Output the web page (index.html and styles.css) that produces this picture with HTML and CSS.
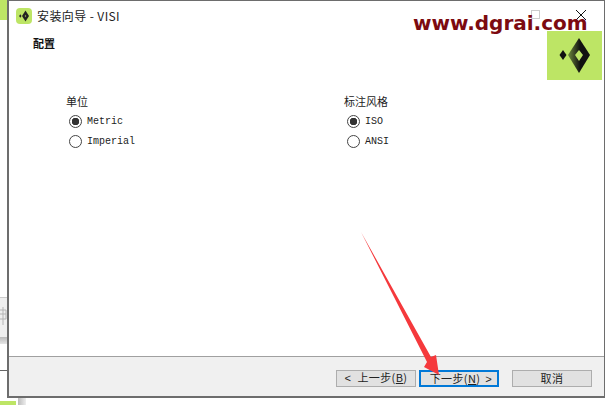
FILE: index.html
```html
<!DOCTYPE html>
<html lang="en">
<head>
	<meta charset="UTF-8">
	<title>安装向导 - VISI</title>
	<link rel="stylesheet" href="styles.css">
</head>
<body>
	<div class="desk-green-top"></div>
	<div class="desk-panel">
		<svg class="desk-glyph" viewBox="0 0 8 26"><path d="M0 5H6V14H0M0 9H6M3 2V20M7.500 0V25" stroke="#b5b5b5" fill="none"/></svg>
	</div>
	<div class="desk-shade"></div>
	<div class="desk-line"></div>
	<div class="desk-green-bottom"></div>
	<div class="desk-tab"></div>

	<div class="window">
		<div class="titlebar">
			<svg class="app-icon" viewBox="0 0 16 16">
				<rect width="16" height="16" rx="4" fill="#bde565"/>
				<path d="M9.500 2.500 13 8l-3.500 5.500L6 8z" fill="#222"/>
				<path d="M9.500 6.800 10.300 8l-.8 1.200L8.700 8z" fill="#8aa84d"/>
				<path d="M4.300 6.200 5.500 8 4.300 9.800 3.100 8z" fill="#222"/>
			</svg>
			<span class="title">安装向导 - VISI</span>
		</div>
		<div class="content">
			<div class="page-head">
				<span class="page-title">配置</span>
				<svg class="logo" viewBox="0 0 55 49">
					<rect width="55" height="49" fill="#bde565"/>
					<defs>
						<linearGradient id="fade" x1="0" y1="0" x2="1" y2="0">
							<stop offset="0" stop-color="#6f8a3c"/>
							<stop offset="0.55" stop-color="#111"/>
						</linearGradient>
					</defs>
					<path d="M32 7 43 24 32 42 21 24z" fill="url(#fade)"/>
					<path d="M32 19 36 24 32 30 28 24z" fill="#bde565"/>
					<path d="M16 19 19.500 24 16 29 12.500 24z" fill="#111"/>
				</svg>
			</div>
			<div class="groups">
				<div class="group">
					<div class="group-label">单位</div>
					<div class="radio on"><i></i><span>Metric</span></div>
					<div class="radio"><i></i><span>Imperial</span></div>
				</div>
				<div class="group">
					<div class="group-label">标注风格</div>
					<div class="radio on"><i></i><span>ISO</span></div>
					<div class="radio"><i></i><span>ANSI</span></div>
				</div>
			</div>
		</div>
		<div class="footer">
			<button class="btn"><span class="chev-back">&lt;</span> 上一步(<u>B</u>)</button>
			<button class="btn primary">下一步(<u>N</u>) <span class="chev-next">&gt;</span></button>
			<button class="btn cancel">取消</button>
		</div>
	</div>

	<svg class="close-x" viewBox="0 0 10 10"><path d="M0 0 10 10M10 0 0 10" stroke="#111" stroke-width="1" fill="none"/></svg>
	<div class="max-box"></div>
	<div class="watermark">www.dgrai.com</div>
	<svg class="arrow" viewBox="0 0 612 405">
		<path d="M361 232 431 357 436 355 439 375 424 367 427 362z" fill="#f5393c"/>
	</svg>
</body>
</html>
```

FILE: styles.css
```css
*{
	margin: 0;
	padding: 0;
	box-sizing: border-box;
}
body{
	position: relative;
	width: 612px;
	height: 405px;
	overflow: hidden;
	background: #fff;
	font-family: "Noto Sans CJK SC", "Liberation Sans", sans-serif;
	font-size: 11px;
	color: #111;
}
/* things behind the window */
.desk-green-top{
	position: absolute;
	left: 0;
	top: 0;
	width: 8px;
	height: 20px;
	background: #bde565;
}
.desk-panel{
	position: absolute;
	left: 0;
	top: 297px;
	width: 8px;
	height: 40px;
	background: #efefef;
	border-top: 1px solid #ccc;
	overflow: hidden;
}
.desk-glyph{
	position: absolute;
	left: 0;
	top: 7px;
	width: 8px;
	height: 26px;
}
.desk-shade{
	position: absolute;
	left: 0;
	top: 337px;
	width: 8px;
	height: 7px;
	background: linear-gradient(#bbb, #e6e6e6);
}
.desk-line{
	position: absolute;
	left: 0;
	top: 370px;
	width: 8px;
	height: 1px;
	background: #666;
}
.desk-green-bottom{
	position: absolute;
	left: 0;
	top: 401px;
	width: 16px;
	height: 4px;
	background: #bde565;
}
.desk-tab{
	position: absolute;
	left: 18px;
	top: 398px;
	width: 8px;
	height: 7px;
	background: linear-gradient(90deg, #bbb, #eee);
}
/* installer window */
.window{
	position: absolute;
	left: 7px;
	top: 0;
	width: 598px;
	height: 398px;
	display: flex;
	flex-direction: column;
	border: 1px solid #6d6d6d;
	border-width: 1px 1px 2px 1px;
	border-left-width: 2px;
	background: #fff;
}
.titlebar{
	height: 30px;
	padding: 7px 0 0 7px;
	display: flex;
	align-items: flex-start;
	gap: 5px;
}
.app-icon{
	width: 16px;
	height: 16px;
}
.title{
	font-size: 12px;
	line-height: 16px;
	letter-spacing: .4px;
	color: #222;
}
.content{
	flex: 1;
}
.page-head{
	display: flex;
	justify-content: space-between;
	align-items: flex-start;
	padding: 0 2px 0 24px;
	height: 64px;
}
.page-title{
	font-size: 11px;
	font-weight: 700;
	line-height: 24px;
}
.logo{
	width: 55px;
	height: 49px;
}
.groups{
	display: flex;
	padding-left: 57px;
}
.group{
	flex: none;
	width: 278px;
}
.group-label{
	font-size: 11px;
	line-height: 13px;
	margin-bottom: 3px;
	color: #222;
}
.radio{
	display: flex;
	align-items: center;
	gap: 5px;
	height: 20px;
	margin-left: 3px;
	font-family: "Liberation Mono", monospace;
	font-size: 10px;
	color: #222;
}
.radio i{
	width: 13px;
	height: 13px;
	border: 1px solid #444;
	border-radius: 50%;
	background: #fff;
	flex: none;
}
.radio.on i{
	background: radial-gradient(circle, #333 0 3.5px, #fff 4px);
}
.footer{
	height: 40px;
	background: #f0f0f0;
	border-top: 1px solid #a0a0a0;
	display: flex;
	align-items: flex-start;
	padding: 13px 0 0 327px;
}
.btn{
	width: 80px;
	height: 17px;
	border: 1px solid #adadad;
	background: #e1e1e1;
	font-family: inherit;
	font-size: 11px;
	line-height: 13px;
	letter-spacing: .4px;
	color: #222;
}
.primary{
	margin-left: 3px;
	padding-left: 4px;
	border: 2px solid #0078d7;
}
.cancel{
	margin-left: 13px;
}
.chev-back{
	font-family: "Liberation Mono", monospace;
	margin-right: 3px;
}
.chev-next{
	font-family: "Liberation Mono", monospace;
	margin-left: 2px;
}
/* overlays */
.close-x{
	position: absolute;
	left: 576px;
	top: 10px;
	width: 10px;
	height: 10px;
}
.max-box{
	position: absolute;
	left: 531px;
	top: 10px;
	width: 9px;
	height: 9px;
	border: 1px solid #ccc;
}
.watermark{
	position: absolute;
	left: 413px;
	top: 9px;
	font-family: "DejaVu Sans", sans-serif;
	font-weight: 700;
	font-size: 20px;
	line-height: 28px;
	color: #7c0a10;
	white-space: nowrap;
}
.arrow{
	position: absolute;
	left: 0;
	top: 0;
	width: 612px;
	height: 405px;
}
```
